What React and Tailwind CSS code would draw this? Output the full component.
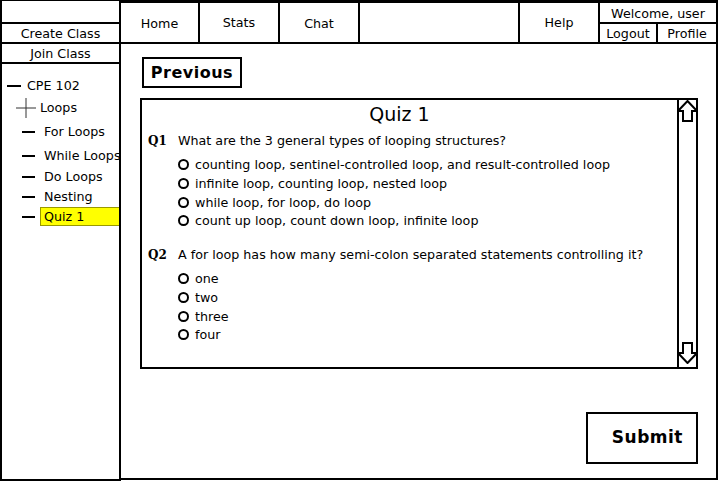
import React from 'react';

const sans = { fontFamily: '"DejaVu Sans", sans-serif' };

const Radio = ({ label, h = 'h-[19px]' }) => (
  <div className={`flex items-center ${h}`}>
    <span className="w-[11px] h-[11px] shrink-0 rounded-full border-[2.5px] border-black mr-[6px] ml-[1px]"></span>
    <span>{label}</span>
  </div>
);

const Question = ({ num, text, options, heights }) => (
  <div>
    <div className="flex items-center h-[20px]">
      <span className="w-[30px] text-[12px] font-bold" style={{ fontFamily: '"DejaVu Serif", serif' }}>{num}</span>
      <span>{text}</span>
    </div>
    <div className="pl-[29px] mt-[4px]">
      {options.map((o, i) => (
        <Radio key={o} label={o} h={heights[i]} />
      ))}
    </div>
  </div>
);

const TreeItem = ({ label, active, h }) => (
  <div className={`flex items-center pl-[20px] ${h}`}>
    <span className="w-[13px] h-[2px] shrink-0 bg-black mr-[5px]"></span>
    <span className={active ? 'bg-[#ffff00] border border-[#999900] pl-[3px] w-[81px] h-[19px] leading-[17px] whitespace-nowrap shrink-0' : 'pl-[4px] whitespace-nowrap shrink-0'}>{label}</span>
  </div>
);

const App = () => {
  return (
    <div className="w-[721px] h-[482px] bg-white flex text-black text-[12.7px]" style={sans}>
      {/* Sidebar */}
      <aside className="w-[121px] h-[481px] border-l-2 border-t border-r-2 border-b-2 border-black flex flex-col overflow-hidden">
        <div className="h-[23px] border-b-2 border-black"></div>
        <div className="h-[20px] border-b-2 border-black flex items-center justify-center pt-[2px]">Create Class</div>
        <div className="h-[20px] border-b-2 border-black flex items-center justify-center pt-[2px]">Join Class</div>
        <div className="pt-[11px]">
          <div className="flex items-center h-[22px] pl-[5px]">
            <span className="w-[14px] h-[2px] bg-black mr-[6px]"></span>
            <span>CPE 102</span>
          </div>
          <div className="flex items-center h-[22px] pl-[14px]">
            <svg width="20" height="20" viewBox="0 0 20 20" className="mr-[4px]">
              <line x1="0" y1="10" x2="20" y2="10" stroke="#333" strokeWidth="1" />
              <line x1="10" y1="0" x2="10" y2="20" stroke="#333" strokeWidth="1" />
            </svg>
            <span>Loops</span>
          </div>
          <div className="pt-[1px]">
            <TreeItem label="For Loops" h="h-[24px]" />
            <TreeItem label="While Loops" h="h-[24px]" />
            <TreeItem label="Do Loops" h="h-[18px]" />
            <TreeItem label="Nesting" h="h-[21px]" />
            <TreeItem label="Quiz 1" h="h-[19px]" active />
          </div>
        </div>
      </aside>

      {/* Main column */}
      <div className="w-[597px] h-[480px] flex flex-col">
        <nav className="h-[44px] border-t-[3px] border-b-2 border-black flex">
          <div className="w-[79px] border-r-2 border-black flex items-center justify-center pt-[2px]">Home</div>
          <div className="w-[80px] border-r-2 border-black flex items-center justify-center">Stats</div>
          <div className="w-[80px] border-r-2 border-black flex items-center justify-center pt-[2px]">Chat</div>
          <div className="w-[160px] border-r-2 border-black"></div>
          <div className="w-[80px] border-r-2 border-black flex items-center justify-center pt-[1px]">Help</div>
          <div className="flex-1 border-r-2 border-black flex flex-col">
            <div className="h-[21px] border-b-2 border-black flex items-center justify-center pt-[3px]">Welcome, user</div>
            <div className="flex-1 flex">
              <div className="w-[58px] border-r-2 border-black flex items-center justify-center">Logout</div>
              <div className="flex-1 flex items-center justify-center">Profile</div>
            </div>
          </div>
        </nav>

        <main className="flex-1 border-r-2 border-b-2 border-black pl-[19px] pr-[18px] pt-[13px] flex flex-col">
          <div className="pl-[2px]">
            <button className="w-[100px] h-[31px] border-2 border-black text-[16px] font-bold tracking-[0.5px] flex items-center justify-center">
              Previous
            </button>
          </div>

          <section className="mt-[10px] h-[271px] border-2 border-black flex">
            <div className="flex-1 pl-[6px] pt-[2px]">
              <h2 className="text-[19px] text-center leading-[24px] pr-[26px]">Quiz 1</h2>
              <div className="mt-[5px]">
                <Question
                  num="Q1"
                  text="What are the 3 general types of looping structures?"
                  heights={['h-[19px]', 'h-[19px]', 'h-[19px]', 'h-[17px]']}
                  options={[
                    'counting loop, sentinel-controlled loop, and result-controlled loop',
                    'infinite loop, counting loop, nested loop',
                    'while loop, for loop, do loop',
                    'count up loop, count down loop, infinite loop',
                  ]}
                />
              </div>
              <div className="mt-[16px]">
                <Question
                  num="Q2"
                  text="A for loop has how many semi-colon separated statements controlling it?"
                  heights={['h-[19px]', 'h-[19px]', 'h-[19px]', 'h-[17px]']}
                  options={['one', 'two', 'three', 'four']}
                />
              </div>
            </div>
            <div className="w-[20px] border-l-2 border-black flex flex-col justify-between items-center pb-[3px] -mr-[1px]">
              <svg width="21" height="22" viewBox="0 0 21 22" className="-ml-[2px]">
                <path d="M10.5 1 L20 11 L15 11 L15 21 L6 21 L6 11 L1 11 Z" fill="white" stroke="black" strokeWidth="2" strokeLinejoin="miter" />
              </svg>
              <svg width="21" height="22" viewBox="0 0 21 22" className="-ml-[2px]">
                <path d="M10.5 21 L20 11 L15 11 L15 1 L6 1 L6 11 L1 11 Z" fill="white" stroke="black" strokeWidth="2" strokeLinejoin="miter" />
              </svg>
            </div>
          </section>

          <div className="flex justify-end mt-[43px]">
            <button className="w-[112px] h-[52px] border-2 border-black text-[17px] font-bold tracking-[0.5px] flex items-center justify-end pr-[13px]">
              Submit
            </button>
          </div>
        </main>
      </div>
    </div>
  );
};

export default App;
